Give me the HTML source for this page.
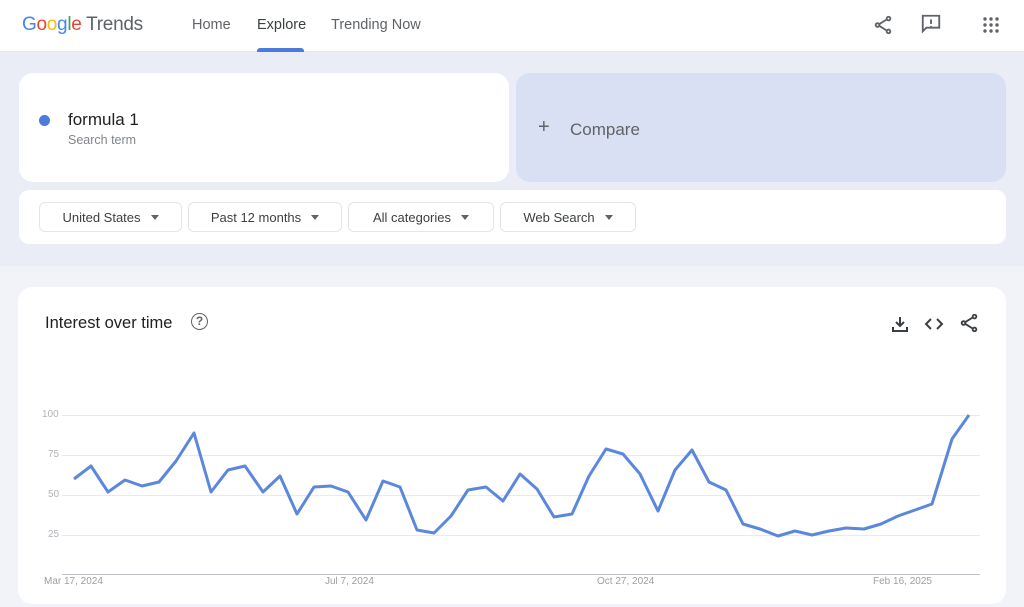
<!DOCTYPE html><html><head><meta charset="utf-8"><style>
body{margin:0;width:1024px;height:607px;overflow:hidden;background:#f1f3f9;font-family:"Liberation Sans",Arial,sans-serif;position:relative}
.a{position:absolute}
.hdr{left:0;top:0;width:1024px;height:51px;background:#fff;border-bottom:1px solid #e4e6ea}
.band{left:0;top:52px;width:1024px;height:214px;background:#eaedf6}
.nav{top:17px;font-size:14.5px;color:#5f6368}
.card{background:#fff;border-radius:14px}
.dd{top:202px;height:30px;border:1px solid #e3e5e8;border-radius:6px;background:#fff;font-size:13px;color:#3c4043;line-height:30px;box-sizing:border-box;text-align:center}
.dd i{display:inline-block;width:0;height:0;border-left:4.5px solid transparent;border-right:4.5px solid transparent;border-top:5px solid #5f6368;margin-left:10px;vertical-align:2px}
.yl{font-size:10px;color:#b0b3b8;left:42px}
.gl{left:62px;width:918px;height:1px;background:#e8eaed}
.xl{font-size:10px;color:#9aa0a6;top:576px}
</style></head><body>
<div class="a hdr"></div>
<div class="a" style="left:22px;top:14px;font-size:19px;letter-spacing:-0.3px"><span style="color:#4285f4">G</span><span style="color:#ea4335">o</span><span style="color:#fbbc05">o</span><span style="color:#4285f4">g</span><span style="color:#34a853">l</span><span style="color:#ea4335">e</span> <span style="color:#5f6368">Trends</span></div>
<div class="a nav" style="left:192px">Home</div>
<div class="a nav" style="left:257px;color:#3c4043">Explore</div>
<div class="a nav" style="left:331px">Trending Now</div>
<div class="a" style="left:257px;top:48px;width:47px;height:4px;background:#4a7cd9;border-radius:3px 3px 0 0"></div>
<svg class="a" style="left:872px;top:14px" width="22" height="22" viewBox="0 0 24 24" fill="none" stroke="#5f6368" stroke-width="2"><circle cx="18" cy="5" r="2"/><circle cx="6" cy="12" r="2"/><circle cx="18" cy="19" r="2"/><path d="M8 11 16 6M8 13l8 5"/></svg>
<svg class="a" style="left:920px;top:13px" width="22" height="22" viewBox="0 0 24 24" fill="none" stroke="#5f6368" stroke-width="2"><path d="M3 3h18v13H7l-4 4z"/><path d="M12 7v5M12 14v1"/></svg>
<svg class="a" style="left:982px;top:16px" width="18" height="18" viewBox="0 0 18 18" fill="#5f6368"><circle cx="3" cy="3" r="1.7"/><circle cx="9" cy="3" r="1.7"/><circle cx="15" cy="3" r="1.7"/><circle cx="3" cy="9" r="1.7"/><circle cx="9" cy="9" r="1.7"/><circle cx="15" cy="9" r="1.7"/><circle cx="3" cy="15" r="1.7"/><circle cx="9" cy="15" r="1.7"/><circle cx="15" cy="15" r="1.7"/></svg>
<div class="a band"></div>
<div class="a card" style="left:19px;top:73px;width:490px;height:109px"></div>
<div class="a" style="left:39px;top:115px;width:11px;height:11px;border-radius:50%;background:#4a7cd9"></div>
<div class="a" style="left:68px;top:110px;font-size:17px;color:#202124">formula 1</div>
<div class="a" style="left:68px;top:133px;font-size:12.5px;color:#80868b">Search term</div>
<div class="a" style="left:516px;top:73px;width:490px;height:109px;background:#dae0f3;border-radius:14px"></div>
<div class="a" style="left:538px;top:116px;font-size:20px;color:#5f6368">+</div>
<div class="a" style="left:570px;top:120px;font-size:17px;color:#5f6368">Compare</div>
<div class="a card" style="left:19px;top:190px;width:987px;height:54px;border-radius:10px"></div>
<div class="a dd" style="left:39px;width:143px">United States<i></i></div>
<div class="a dd" style="left:188px;width:154px">Past 12 months<i></i></div>
<div class="a dd" style="left:348px;width:146px">All categories<i></i></div>
<div class="a dd" style="left:500px;width:136px">Web Search<i></i></div>
<div class="a card" style="left:18px;top:287px;width:988px;height:317px"></div>
<div class="a" style="left:45px;top:314px;font-size:16.5px;color:#202124">Interest over time</div>
<div class="a" style="left:191px;top:313px;width:15px;height:15px;border:1.5px solid #5f6368;border-radius:50%;font-size:12px;color:#5f6368;text-align:center;line-height:15px;font-weight:bold">?</div>
<svg class="a" style="left:890px;top:314px" width="20" height="20" viewBox="0 0 20 20" fill="none" stroke="#3c4043" stroke-width="2"><path d="M10 3v9M6 8l4 4 4-4M3 13v4h14v-4"/></svg>
<svg class="a" style="left:924px;top:314px" width="20" height="20" viewBox="0 0 20 20" fill="none" stroke="#3c4043" stroke-width="2"><path d="M7 5 2 10l5 5M13 5l5 5-5 5"/></svg>
<svg class="a" style="left:958px;top:312px" width="22" height="22" viewBox="0 0 24 24" fill="none" stroke="#3c4043" stroke-width="2"><circle cx="18" cy="5" r="2"/><circle cx="6" cy="12" r="2"/><circle cx="18" cy="19" r="2"/><path d="M8 11 16 6M8 13l8 5"/></svg>
<div class="a gl" style="top:415px"></div><div class="a gl" style="top:455px"></div><div class="a gl" style="top:495px"></div><div class="a gl" style="top:535px"></div>
<div class="a" style="left:62px;top:574px;width:918px;height:1px;background:#bdc1c6"></div>
<div class="a yl" style="top:409px">100</div><div class="a yl" style="top:449px;left:48px">75</div><div class="a yl" style="top:489px;left:48px">50</div><div class="a yl" style="top:529px;left:48px">25</div>
<div class="a xl" style="left:44px">Mar 17, 2024</div><div class="a xl" style="left:325px">Jul 7, 2024</div><div class="a xl" style="left:597px">Oct 27, 2024</div><div class="a xl" style="left:873px">Feb 16, 2025</div>
<svg class="a" style="left:0;top:0" width="1024" height="607"><polyline fill="none" stroke="#5b87dc" stroke-width="3" stroke-linejoin="round" points="74,479 91,466 108,492 125,480 142,486 159,482 176,461 194,433 211,492 228,470 245,466 263,492 280,476 297,514 314,487 331,486 348,492 366,520 383,481 400,487 417,530 434,533 451,516 468,490 486,487 503,501 520,474 537,489 554,517 572,514 589,476 606,449 623,454 640,474 658,511 675,470 692,450 709,482 726,490 743,524 760,529 778,536 795,531 812,535 829,531 846,528 864,529 881,524 898,516 915,510 932,504 952,439 969,415"/></svg>
</body></html>
